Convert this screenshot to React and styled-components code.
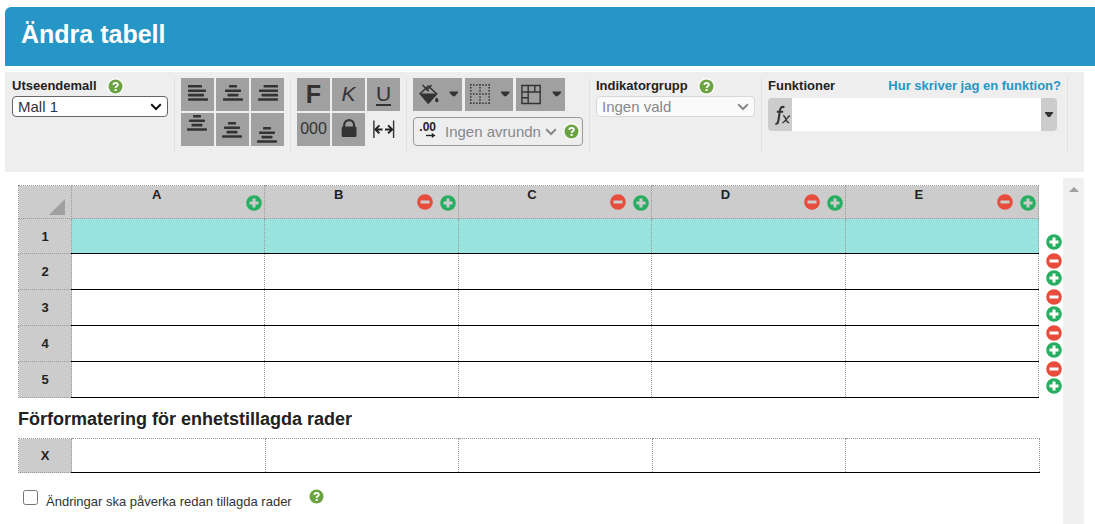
import React from "react";
import styled, { createGlobalStyle } from "styled-components";

const GlobalStyle = createGlobalStyle`
  *, *::before, *::after { box-sizing: border-box; }
  body {
    margin: 0;
    background: #fff;
    color: #222;
    font-family: "Liberation Sans", Arial, sans-serif;
    font-size: 13px;
  }
  button, input, select { font-family: inherit; margin: 0; }
`;

const Page = styled.div`
  display: flex;
  flex-direction: column;
  min-height: 100vh;
  padding: 7px 0 0 5px;
`;

const TitleBar = styled.header`
  padding: 12px 16px 17px;
  background: #2696c6;
  border-radius: 6px 0 0 0;
`;

const Title = styled.h1`
  margin: 0;
  color: #fff;
  font-size: 25px;
  line-height: 30px;
`;

const Toolbar = styled.div`
  display: flex;
  align-items: flex-start;
  min-height: 100px;
  margin: 6px 11px 6px 0;
  padding: 6px 16px 0 1px;
  background: #eee;
`;

const Group = styled.div`
  display: flex;
  flex-direction: column;
  flex: ${(p) => (p.$grow ? "1 1 0" : "none")};
  min-width: 0;
  min-height: 75px;
  padding: 0 6px;
  border-right: 1px solid #e0e0e0;
`;

const LabelRow = styled.div`
  display: flex;
  align-items: center;
  gap: 10px;
  height: 16px;
  margin-bottom: 2px;
  justify-content: ${(p) => (p.$spread ? "space-between" : "flex-start")};
`;

const FieldLabel = styled.label`
  font-size: 13px;
  line-height: 16px;
  font-weight: bold;
`;

const HelpLink = styled.a`
  font-size: 13px;
  line-height: 16px;
  font-weight: bold;
  color: #2696c6;
  text-decoration: none;
`;

const SelectBox = styled.div`
  display: grid;
  flex: ${(p) => (p.$width ? "none" : "1")};
  width: ${(p) => (p.$width ? `${p.$width}px` : "auto")};
  min-width: 0;
  align-items: center;
  > * { grid-area: 1 / 1; }
  > svg {
    justify-self: end;
    margin-right: 6px;
    pointer-events: none;
  }
`;

const Select = styled.select`
  appearance: none;
  width: 100%;
  height: 21px;
  padding: 0 24px 0 5px;
  color: #333;
  font-size: 15px;
  background: #fff;
  border: 1px solid #666;
  border-radius: 4px;
  &:disabled {
    color: #888;
    background: #fafafa;
    border-color: #d8d8d8;
    opacity: 1;
  }
`;

const ToolGrid = styled.div`
  display: grid;
  grid-template-columns: repeat(3, 33px);
  gap: 2px;
`;

const ToolButton = styled.button`
  display: flex;
  align-items: center;
  justify-content: center;
  width: ${(p) => p.$width || 33}px;
  height: 33px;
  padding: 0;
  border: 0;
  color: #333;
  background: ${(p) => (p.$plain ? "transparent" : "#a0a0a0")};
`;

const Glyph = styled.span`
  font-size: ${(p) => p.$size}px;
  line-height: 20px;
  font-weight: ${(p) => (p.$bold ? "bold" : "normal")};
  font-style: ${(p) => (p.$italic ? "italic" : "normal")};
  border-bottom: 2px solid ${(p) => (p.$underline ? "#333" : "transparent")};
`;

const DropRow = styled.div`
  display: flex;
  gap: 3px;
`;

const Rounding = styled.div`
  display: flex;
  align-items: center;
  width: 170px;
  height: 29px;
  margin-top: 6px;
  padding: 0 2px 0 4px;
  border: 1px solid #999;
  border-radius: 4px;
`;

const Decimals = styled.label`
  display: flex;
  flex-direction: column;
  align-items: flex-end;
  width: 18px;
  padding-bottom: 4px;
  color: #222;
  font-size: 12px;
  font-weight: bold;
  line-height: 12px;
`;

const RoundingSelect = styled.select`
  appearance: none;
  width: 100%;
  height: 25px;
  padding: 0 22px 0 9px;
  border: 0;
  background: transparent;
  color: #888;
  font-size: 15px;
  &:disabled { opacity: 1; }
`;

const HelpButton = styled.button`
  display: flex;
  flex: none;
  width: 17px;
  height: 17px;
  padding: 0;
  border: 0;
  background: transparent;
`;

const FormulaBar = styled.div`
  display: flex;
  height: 33px;
  margin: 2px 4px 0 0;
  border-radius: 4px;
  overflow: hidden;
`;

const FormulaButton = styled.button`
  display: flex;
  align-items: center;
  justify-content: center;
  width: ${(p) => p.$width}px;
  padding: 0;
  border: 0;
  color: #333;
  background: #ccc;
`;

const FormulaInput = styled.input`
  flex: 1;
  min-width: 0;
  border: 0;
  padding: 0 6px;
  background: #fff;
  font-size: 15px;
`;

const Workspace = styled.main`
  display: flex;
  flex: 1;
  margin-right: 11px;
`;

const Content = styled.div`
  flex: 1;
  min-width: 0;
  padding: 7px 1px 0 13px;
`;

const SheetRow = styled.div`
  display: flex;
  align-items: flex-start;
  gap: 7px;
`;

const Sheet = styled.table`
  flex: 1;
  width: 100%;
  table-layout: fixed;
  border-collapse: collapse;
`;

const HeadCell = styled.th`
  width: ${(p) => (p.$corner ? "53px" : "auto")};
  height: ${(p) => p.$height}px;
  padding: 0;
  vertical-align: ${(p) => (p.$top ? "top" : "middle")};
  color: #222;
  background: #ccc;
  border: 1px dotted #999;
  font-size: 13px;
`;

const Cell = styled.td`
  padding: 0;
  background: ${(p) => (p.$marked ? "#99e4de" : "#fff")};
  border: 1px dotted #999;
  border-bottom: 1px solid #000;
`;

const ColumnHead = styled.div`
  display: flex;
  align-items: flex-start;
  gap: 7px;
  padding: 1px 2px 0;
`;

const ColumnName = styled.span`
  flex: 1;
  line-height: 16px;
`;

const RoundButton = styled.button`
  display: block;
  width: 16px;
  height: 16px;
  padding: 0;
  border: 0;
  background: transparent;
  margin-top: ${(p) => p.$top || 0}px;
`;

const CornerMark = styled.svg`
  display: block;
  margin: 13px 6px 3px auto;
`;

const RowControls = styled.div`
  display: flex;
  flex-direction: column;
  gap: 3px;
  padding-top: 49px;
`;

const RowPair = styled.div`
  display: flex;
  flex-direction: column;
  gap: 1px;
`;

const SectionTitle = styled.h2`
  margin: 0;
  padding-top: 3px;
  font-size: 18px;
  line-height: 37px;
`;

const PresetArea = styled.div`
  margin-right: 22px;
`;

const CheckRow = styled.div`
  display: flex;
  align-items: flex-start;
  padding: 15px 0 0 5px;
`;

const Checkbox = styled.input`
  && { margin-top: 2px; }
  width: 15px;
  height: 15px;
`;

const CheckLabel = styled.label`
  margin: 6px 16px 0 8px;
  color: #333;
  font-size: 13px;
  line-height: 16px;
`;

const ScrollTrack = styled.div`
  width: 21px;
  background: #f0f0f0;
`;

const ScrollButton = styled.button`
  display: flex;
  align-items: center;
  justify-content: center;
  width: 21px;
  height: 22px;
  padding: 0;
  border: 0;
  background: transparent;
`;

function Help() {
  return (
    <HelpButton type="button" aria-label="Hjälp">
      <svg width="17" height="17" viewBox="0 0 17 17">
        <circle cx="8.5" cy="8.5" r="8.3" fill="#fff" />
        <circle cx="8.5" cy="8.5" r="7" fill="#6aa341" />
        <path d="M6.3 6.9C6.4 4.1 10.9 4.2 10.8 6.8C10.7 8.3 8.7 8.2 8.6 9.9" fill="none" stroke="#fff" strokeWidth="1.9" />
        <rect x="7.6" y="11" width="2" height="2" fill="#fff" />
      </svg>
    </HelpButton>
  );
}

function Chevron({ color }) {
  return (
    <svg width="12" height="8" viewBox="0 0 12 8">
      <path d="M1.2 1.2L6 6l4.8-4.8" fill="none" stroke={color} strokeWidth="2" />
    </svg>
  );
}

function Round({ kind, label, top, ink = "#fff" }) {
  return (
    <RoundButton type="button" aria-label={label} $top={top}>
      <svg width="16" height="16" viewBox="0 0 16 16" display="block">
        <circle cx="8" cy="8" r="7.8" fill={kind === "plus" ? "#27ae60" : "#e74c3c"} />
        {kind === "plus" ? (
          <path d="M3.5 8h9M8 3.5v9" stroke={ink} strokeWidth="3" />
        ) : (
          <path d="M3.5 8h9" stroke={ink} strokeWidth="3" />
        )}
      </svg>
    </RoundButton>
  );
}

const BARS = {
  left: [[7, 21], [7, 25], [7, 23], [7, 27]],
  center: [[13, 21], [9, 25], [11.5, 22.5], [7, 27]],
  right: [[12.5, 27], [8, 27], [10.5, 27], [7, 27]],
};

function AlignIcon({ align, x = 0, y = 7 }) {
  return (
    <svg width="33" height="33" viewBox="0 0 33 33">
      {BARS[align].map(([from, to], i) => (
        <rect key={i} x={from + x} y={y + i * 4.4} width={to - from} height="2.6" rx="0.7" fill="#333" />
      ))}
    </svg>
  );
}

const ALIGNMENTS = [
  ["Vänsterjustera", { align: "left" }],
  ["Centrera", { align: "center" }],
  ["Högerjustera", { align: "right" }],
  ["Justera upptill", { align: "center", x: -1, y: 2 }],
  ["Justera mitten", { align: "center", x: -1, y: 9 }],
  ["Justera nedtill", { align: "center", x: -1, y: 14 }],
];

function Caret({ x }) {
  return <path d={`M${x} 13.5h8.4v1.3l-3.2 3.4h-2l-3.2-3.4z`} fill="#333" />;
}

function FillIcon() {
  return (
    <svg width="49" height="33" viewBox="0 0 49 33">
      <path d="M6.8 16L15.3 8L23.8 16" fill="none" stroke="#333" strokeWidth="1.6" />
      <path d="M6 15.5h19L15.8 25.8h-1z" fill="#333" />
      <path d="M9.5 7l6.2 6.2M18.5 7l-5 5.5" fill="none" stroke="#333" strokeWidth="1.5" />
      <path d="M23.7 19.3c1 1.4 1.8 2.3 1.8 3.2a1.7 1.7 0 0 1-3.5 0c0-.9.8-1.8 1.7-3.2z" fill="#333" />
      <Caret x={36.6} />
    </svg>
  );
}

function BordersIcon() {
  return (
    <svg width="48" height="33" viewBox="0 0 48 33">
      <path d="M5 6.9h20M5 16h20M5 25.2h20M5.8 6v20M15 6v20M24.2 6v20" stroke="#333" strokeWidth="1.5" strokeDasharray="1.5 1.55" />
      <Caret x={36} />
    </svg>
  );
}

function LayoutIcon() {
  return (
    <svg width="49" height="33" viewBox="0 0 49 33">
      <path d="M5.9 7.5h18.3v18H5.9zM5.9 14h18.3M12.2 7.5v18M18.8 7.5V14M5.9 19.8h6.3" fill="none" stroke="#333" strokeWidth="1.4" />
      <Caret x={36.6} />
    </svg>
  );
}

function LockIcon() {
  return (
    <svg width="33" height="33" viewBox="0 0 33 33">
      <path d="M12.2 15v-3.2a4.9 4.7 0 0 1 9.8 0V15" fill="none" stroke="#333" strokeWidth="2.2" />
      <rect x="9.7" y="13.6" width="14.8" height="10.4" rx="1.3" fill="#333" />
    </svg>
  );
}

function WidthIcon() {
  return (
    <svg width="33" height="33" viewBox="0 0 33 33">
      <path d="M6.9 7.5v17.5M26.6 7.5v17.5" stroke="#333" strokeWidth="1.4" />
      <path d="M8.7 16.4h6.8M12.4 12.4l-4 4l4 4M18 16.4h6.8M21.1 12.4l4 4l-4 4" fill="none" stroke="#222" strokeWidth="2" />
    </svg>
  );
}

function FunctionIcon() {
  return (
    <svg width="24" height="33" viewBox="0 0 24 33" fill="none" stroke="#333">
      <path d="M16.4 9.4c-2.3-1.2-3.8-.2-4.3 2.3L10.4 22.5c-.5 2.8-1.3 3.6-3 3.2M8.8 13.8h6.4" strokeWidth="2.1" />
      <path d="M15.2 17.8c2.8-.3 2.4 7.5 6 6.8M22 17.7c-2.4.4-4.6 6.6-7.6 7" strokeWidth="1.4" />
    </svg>
  );
}

const COLUMNS = ["A", "B", "C", "D", "E"];
const ROWS = [1, 2, 3, 4, 5];

export default function App() {
  return (
    <>
      <GlobalStyle />
      <Page>
        <TitleBar>
          <Title>Ändra tabell</Title>
        </TitleBar>
        <Toolbar>
          <Group>
            <LabelRow>
              <FieldLabel htmlFor="template">Utseendemall</FieldLabel>
              <Help />
            </LabelRow>
            <SelectBox $width={156}>
              <Select id="template">
                <option>Mall 1</option>
              </Select>
              <Chevron color="#111" />
            </SelectBox>
          </Group>
          <Group>
            <ToolGrid>
              {ALIGNMENTS.map(([name, icon]) => (
                <ToolButton key={name} type="button" aria-label={name}>
                  <AlignIcon {...icon} />
                </ToolButton>
              ))}
            </ToolGrid>
          </Group>
          <Group>
            <ToolGrid>
              <ToolButton type="button"><Glyph $size={25} $bold>F</Glyph></ToolButton>
              <ToolButton type="button"><Glyph $size={21} $italic>K</Glyph></ToolButton>
              <ToolButton type="button"><Glyph $size={21} $underline>U</Glyph></ToolButton>
              <ToolButton type="button"><Glyph $size={16}>000</Glyph></ToolButton>
              <ToolButton type="button" aria-label="Lås"><LockIcon /></ToolButton>
              <ToolButton type="button" aria-label="Kolumnbredd" $plain><WidthIcon /></ToolButton>
            </ToolGrid>
          </Group>
          <Group>
            <DropRow>
              <ToolButton type="button" aria-label="Fyllning" $width={49}><FillIcon /></ToolButton>
              <ToolButton type="button" aria-label="Kantlinjer" $width={48}><BordersIcon /></ToolButton>
              <ToolButton type="button" aria-label="Celler" $width={49}><LayoutIcon /></ToolButton>
            </DropRow>
            <Rounding>
              <Decimals htmlFor="rounding">
                .00
                <svg width="10" height="5" viewBox="0 0 10 5">
                  <path d="M0 2.5h6.5" stroke="#222" strokeWidth="1.4" />
                  <path d="M5.8 0l3.7 2.5L5.8 5z" fill="#222" />
                </svg>
              </Decimals>
              <SelectBox>
                <RoundingSelect id="rounding" disabled>
                  <option>Ingen avrundning</option>
                </RoundingSelect>
                <Chevron color="#888" />
              </SelectBox>
              <Help />
            </Rounding>
          </Group>
          <Group>
            <LabelRow>
              <FieldLabel htmlFor="indicator">Indikatorgrupp</FieldLabel>
              <Help />
            </LabelRow>
            <SelectBox $width={159}>
              <Select id="indicator" disabled>
                <option>Ingen vald</option>
              </Select>
              <Chevron color="#888" />
            </SelectBox>
          </Group>
          <Group $grow>
            <LabelRow $spread>
              <FieldLabel htmlFor="formula">Funktioner</FieldLabel>
              <HelpLink href="#funktion">Hur skriver jag en funktion?</HelpLink>
            </LabelRow>
            <FormulaBar>
              <FormulaButton type="button" aria-label="Infoga funktion" $width={24}><FunctionIcon /></FormulaButton>
              <FormulaInput id="formula" type="text" />
              <FormulaButton type="button" aria-label="Visa funktioner" $width={16}>
                <svg width="8" height="5" viewBox="0 0 8 5"><path d="M0 0h8v1L5 5H3L0 1z" fill="#333" /></svg>
              </FormulaButton>
            </FormulaBar>
          </Group>
        </Toolbar>
        <Workspace>
          <Content>
            <SheetRow>
              <Sheet>
                <thead>
                  <tr>
                    <HeadCell $corner $height={33} $top>
                      <CornerMark width="16" height="16" viewBox="0 0 16 16">
                        <path d="M16 0v16H0z" fill="#a0a0a0" />
                      </CornerMark>
                    </HeadCell>
                    {COLUMNS.map((name, i) => (
                      <HeadCell key={name} scope="col" $height={33} $top>
                        <ColumnHead>
                          <ColumnName>{name}</ColumnName>
                          {i > 0 && <Round kind="minus" label={`Ta bort kolumn ${name}`} top={7} ink="#ccc" />}
                          <Round kind="plus" label={`Lägg till kolumn efter ${name}`} top={8} ink="#ccc" />
                        </ColumnHead>
                      </HeadCell>
                    ))}
                  </tr>
                </thead>
                <tbody>
                  {ROWS.map((row) => (
                    <tr key={row}>
                      <HeadCell scope="row" $height={row === 1 ? 35 : 36}>{row}</HeadCell>
                      {COLUMNS.map((name) => (
                        <Cell key={name} $marked={row === 1} />
                      ))}
                    </tr>
                  ))}
                </tbody>
              </Sheet>
              <RowControls>
                {ROWS.map((row) => (
                  <RowPair key={row}>
                    {row > 1 && <Round kind="minus" label={`Ta bort rad ${row}`} />}
                    <Round kind="plus" label={`Lägg till rad efter ${row}`} />
                  </RowPair>
                ))}
              </RowControls>
            </SheetRow>
            <PresetArea>
              <SectionTitle>Förformatering för enhetstillagda rader</SectionTitle>
              <Sheet>
                <tbody>
                  <tr>
                    <HeadCell scope="row" $corner $height={34}>X</HeadCell>
                    {COLUMNS.map((name) => (
                      <Cell key={name} />
                    ))}
                  </tr>
                </tbody>
              </Sheet>
            </PresetArea>
            <CheckRow>
              <Checkbox type="checkbox" id="affect" />
              <CheckLabel htmlFor="affect">Ändringar ska påverka redan tillagda rader</CheckLabel>
              <Help />
            </CheckRow>
          </Content>
          <ScrollTrack>
            <ScrollButton type="button" aria-label="Rulla uppåt">
              <svg width="10" height="5" viewBox="0 0 10 5"><path d="M5 0l5 5H0z" fill="#a0a0a0" /></svg>
            </ScrollButton>
          </ScrollTrack>
        </Workspace>
      </Page>
    </>
  );
}
